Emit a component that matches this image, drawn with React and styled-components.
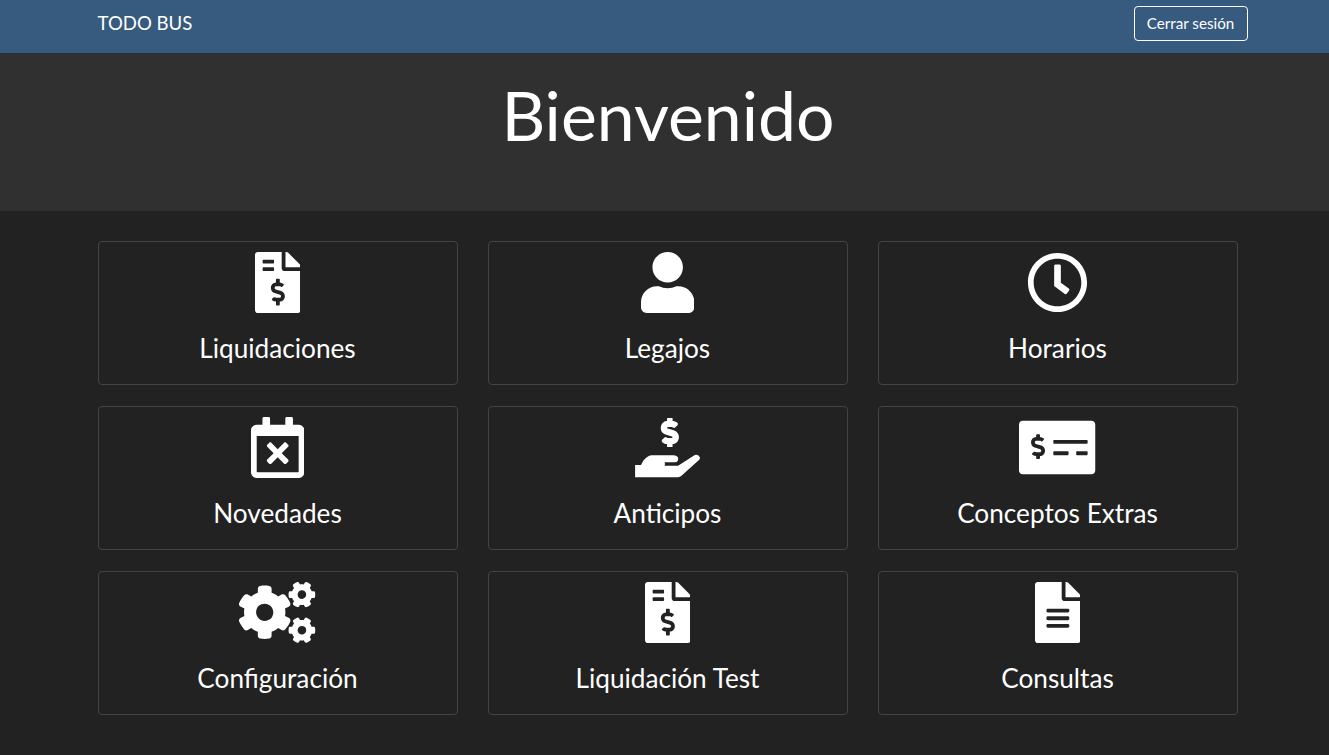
import React from "react";
import styled, { createGlobalStyle } from "styled-components";
import {
  FaFileInvoiceDollar,
  FaUser,
  FaRegClock,
  FaRegCalendarTimes,
  FaDollarSign,
  FaMoneyCheckAlt,
  FaCogs,
  FaFileAlt,
} from "react-icons/fa";

const Global = createGlobalStyle`
  html, body { margin: 0; padding: 0; background: #222222; }
  body { font-family: Lato, "Liberation Sans", sans-serif; color: #fff; }
  * { box-sizing: border-box; }
`;

const Page = styled.div`
  min-height: 755px;
  background: #222222;
`;

const Navbar = styled.header`
  height: 53px;
  background: #375a7f;
  display: flex;
  align-items: center;
  justify-content: space-between;
  padding: 0 81px 6px 98px;
`;

const Brand = styled.a`
  font-size: 18.6px;
  line-height: 28px;
  color: #fff;
  margin-top: -2px;
  margin-left: -0.5px;
`;

const LogoutButton = styled.button`
  font: inherit;
  font-size: 15.2px;
  line-height: 22px;
  color: #fff;
  background: transparent;
  border: 1px solid #fff;
  border-radius: 4px;
  padding: 4px 1px 6px 0;
  height: 35px;
  width: 114px;
  white-space: nowrap;
`;

const Hero = styled.section`
  height: 158px;
  background: #303030;
  display: flex;
  justify-content: center;
  padding: 23px 0 0 7px;
`;

const Title = styled.h1`
  margin: 0;
  font-size: 67.9px;
  font-weight: 400;
  line-height: 78px;
`;

const Grid = styled.main`
  display: grid;
  grid-template-columns: repeat(3, 360px);
  grid-auto-rows: 144px;
  gap: 21px 30px;
  padding: 30px 0 0 98px;
`;

const Card = styled.a`
  border: 1px solid #444444;
  border-radius: 4px;
  background: #222222;
  display: flex;
  flex-direction: column;
  align-items: center;
  padding: 10px 1px 0 0;
  color: #fff;
`;

const IconSlot = styled.div`
  height: 61px;
  display: flex;
  align-items: center;
  justify-content: center;
  font-size: 61px;
  line-height: 0;

  > svg {
    flex: none;
    width: ${(p) => p.$ratio}em;
    height: 1em;
  }
`;

const Label = styled.span`
  margin-top: 19px;
  font-size: 26.2px;
  line-height: 32px;
  white-space: nowrap;
`;

const HandHoldingDollar = () => (
  <svg viewBox="0 0 68.6 61" fill="currentColor">
    <FaDollarSign x="22.3" y="1" size={29} strokeWidth={34} strokeLinejoin="round" />
    <path d="M2.1 48 L2.1 60.3 L45.1 60.3 Q47 60.1 48.5 58.7 L64.8 44 Q67.6 41.6 66.8 40.2 Q65 37 61.8 38 L45.1 48.7 L31.8 48.7 L31.8 45.3 L41.8 45.3 Q45.1 45.3 45.2 41.8 Q45 38.3 40.1 38.3 L18.5 38.3 Q14 38.8 10.1 44 L8 48 Z" />
  </svg>
);

const items = [
  ["Liquidaciones", FaFileInvoiceDollar, 0.75],
  ["Legajos", FaUser, 0.875],
  ["Horarios", FaRegClock, 1],
  ["Novedades", FaRegCalendarTimes, 0.875],
  ["Anticipos", HandHoldingDollar, 1.125],
  ["Conceptos Extras", FaMoneyCheckAlt, 1.25],
  ["Configuración", FaCogs, 1.25],
  ["Liquidación Test", FaFileInvoiceDollar, 0.75],
  ["Consultas", FaFileAlt, 0.75],
];

export default function App() {
  return (
    <Page>
      <Global />
      <Navbar>
        <Brand>TODO BUS</Brand>
        <LogoutButton>Cerrar sesión</LogoutButton>
      </Navbar>
      <Hero>
        <Title>Bienvenido</Title>
      </Hero>
      <Grid>
        {items.map(([label, Icon, ratio]) => (
          <Card key={label}>
            <IconSlot $ratio={ratio}>
              <Icon />
            </IconSlot>
            <Label>{label}</Label>
          </Card>
        ))}
      </Grid>
    </Page>
  );
}
